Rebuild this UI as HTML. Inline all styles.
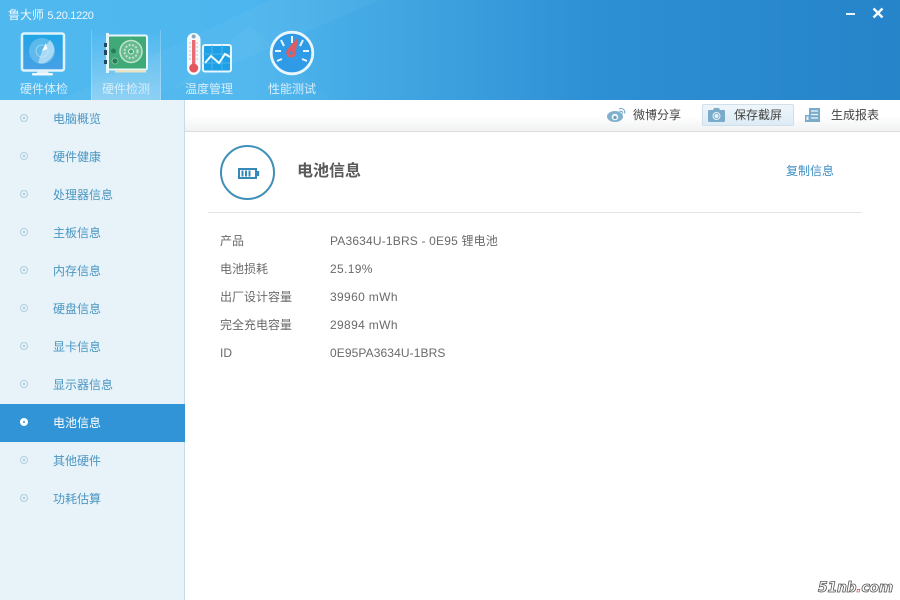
<!DOCTYPE html>
<html lang="zh-CN"><head><meta charset="utf-8"><title>鲁大师</title>
<style>
*{margin:0;padding:0;box-sizing:border-box}
html,body{width:900px;height:600px;overflow:hidden;background:#fff}
body{position:relative;font-family:"Liberation Sans","Noto Sans CJK SC",sans-serif;font-size:12px}
.a{position:absolute;white-space:nowrap}
#hd{left:0;top:0;width:900px;height:100px;background:linear-gradient(90deg,#4fb9ef 0,#4db6ee 250px,#3fa3e0 420px,#2d8fd4 600px,#2684c9 900px);overflow:hidden}
.nav{color:#d6eefb;font-size:12px;top:81px;width:72px;text-align:center;line-height:16px}
#side{left:0;top:100px;width:185px;height:500px;background:#e7f3f9;border-right:1px solid #c5dbe8}
.it{position:absolute;left:53px;color:#4b96c2;font-size:12px;line-height:16px;white-space:nowrap}
.dot{position:absolute;left:20px;width:8px;height:8px;border:1px solid #b0cfde;border-radius:50%}
.dot:after{content:"";position:absolute;left:2px;top:2px;width:2px;height:2px;background:#96bdd1;border-radius:50%}
#tb{left:185px;top:100px;width:715px;height:32px;background:linear-gradient(#fff 0,#fff 50%,#f1f2f3 100%);border-bottom:1px solid #dcdcdc}
.tt{color:#444;font-size:12px;top:107px;line-height:16px}
.l{left:220px;color:#6a6a6a;line-height:16px}
.v{left:330px;color:#6a6a6a;line-height:16px;letter-spacing:.35px}
</style></head><body>
<div class="a" id="hd">
<svg width="900" height="100" style="position:absolute;left:0;top:0"><path d="M60 100L270 0H380L150 100Z" fill="#fff" opacity=".04"/><path d="M160 100L250 25L330 100Z" fill="#fff" opacity=".03"/></svg>
<div class="a" style="left:91px;top:30px;width:70px;height:70px;background:linear-gradient(rgba(255,255,255,0),rgba(255,255,255,.34));border-left:1px solid rgba(255,255,255,.22);border-right:1px solid rgba(255,255,255,.22)"></div>
<div class="a" style="left:8px;top:7px;color:#eef8fe;font-size:12px;line-height:16px">鲁大师 <span style="font-size:11px;letter-spacing:-.3px">5.20.1220</span></div>
<svg class="a" style="left:0;top:25px;filter:blur(.35px)" width="340" height="60" viewBox="0 25 340 60">
<!-- monitor -->
<defs><linearGradient id="m" x1="0" y1="0" x2="0" y2="1"><stop offset="0" stop-color="#1fa6e6"/><stop offset="1" stop-color="#4a9fe6"/></linearGradient></defs>
<rect x="22" y="33.5" width="42" height="37" rx="2" fill="url(#m)" stroke="#dff3fc" stroke-width="2.5"/>
<circle cx="42" cy="51" r="13" fill="#7cc8f0" opacity=".6"/><circle cx="42" cy="51" r="6" fill="none" stroke="#b6e1f7" opacity=".7"/>
<path d="M42 51L50 40C56 46 56 55 48 61C46 63 42 64 38 63Z" fill="#cfeafa" opacity=".65"/><path d="M42 51L46 43L47 49Z" fill="#fff"/>
<path d="M37 71H48L49 74H37Z" fill="#dfeff8"/><rect x="32" y="73" width="21" height="2.5" rx="1" fill="#eef8fd"/>
<!-- card -->
<rect x="106" y="33" width="3" height="40" fill="#e3f3fb"/><rect x="104" y="43" width="3" height="4" fill="#23475f"/><rect x="104" y="50" width="3" height="5" fill="#23475f"/><rect x="104" y="60" width="3" height="4" fill="#23475f"/>
<rect x="108" y="35.5" width="39" height="34" rx="1.5" fill="#3faa78" stroke="#e8f6f9" stroke-width="2"/>
<path d="M115 70H146V72.500H115Z" fill="#e8e3c2"/>
<circle cx="131" cy="51.5" r="11" fill="#67b98f" stroke="#bfe5cd" stroke-width="1.5"/><circle cx="131" cy="51.5" r="6.5" fill="none" stroke="#bfe5cd" stroke-width="2" stroke-dasharray="2 1.5"/><circle cx="131" cy="51.5" r="2.5" fill="#3faa78" stroke="#d4efdd"/>
<circle cx="113.5" cy="51" r="2.5" fill="#2a7d5a"/><circle cx="115" cy="61" r="3" fill="#2a7d5a" stroke="#8fcfae" stroke-width=".7"/>
<!-- thermometer -->
<rect x="187" y="33" width="13.500" height="42" rx="6.700" fill="#f3f9fc"/><rect x="192" y="40" width="3.400" height="26" fill="#e76b72"/><circle cx="193.700" cy="68" r="4.500" fill="#e4555f"/><circle cx="193.700" cy="36.500" r="2" fill="#8aa8ba"/>
<path d="M196 43h2M196 47h2M196 51h2M196 55h2M196 59h2M189 43h2M189 47h2M189 51h2M189 55h2M189 59h2" stroke="#d6a2a8" stroke-width=".8"/>
<!-- chart -->
<rect x="203" y="45" width="28" height="26.500" rx="2" fill="#1ea0e6" stroke="#e6f6fd" stroke-width="2"/>
<path d="M212 45V71M222 45V71M203 54H230M203 63H230" stroke="#5cbcee" stroke-width=".7"/>
<path d="M205 63L211 56L219 63L225 54L230 57" fill="none" stroke="#f4fbff" stroke-width="2"/>
<!-- gauge -->
<circle cx="292" cy="53" r="20.800" fill="#2f9ae6" stroke="#e9f7fd" stroke-width="2.800"/>
<path d="M292 36V43M281 40L284 46M303 40L300 46M275 51H281M309 51H303M277 61L282 59M307 61L302 59" stroke="#e6f6fc" stroke-width="2"/>
<path d="M298 37L296 51A5 5 0 1 1 287 50Z" fill="#de5d63"/><circle cx="291" cy="53" r="1.600" fill="#2f95e3"/>
</svg>
<div class="a nav" style="left:8px">硬件体检</div>
<div class="a nav" style="left:90px">硬件检测</div>
<div class="a nav" style="left:173px">温度管理</div>
<div class="a nav" style="left:256px">性能测试</div>
<svg class="a" style="left:840px;top:5px" width="50" height="16"><rect x="6" y="8" width="9" height="2" fill="#e8f5fc"/><path d="M33.500 3.500L42.500 12.500M42.500 3.500L33.500 12.500" stroke="#f4fbff" stroke-width="2.400"/></svg>
</div>
<div class="a" id="side">
<div class="a" style="left:0;top:304px;width:185px;height:38px;background:#3094d7"></div>
<i class="dot" style="top:14px"></i><div class="it" style="top:11px">电脑概览</div>
<i class="dot" style="top:52px"></i><div class="it" style="top:49px">硬件健康</div>
<i class="dot" style="top:90px"></i><div class="it" style="top:87px">处理器信息</div>
<i class="dot" style="top:128px"></i><div class="it" style="top:125px">主板信息</div>
<i class="dot" style="top:166px"></i><div class="it" style="top:163px">内存信息</div>
<i class="dot" style="top:204px"></i><div class="it" style="top:201px">硬盘信息</div>
<i class="dot" style="top:242px"></i><div class="it" style="top:239px">显卡信息</div>
<i class="dot" style="top:280px"></i><div class="it" style="top:277px">显示器信息</div>
<svg class="a" style="left:20px;top:318px" width="9" height="9"><circle cx="4" cy="4" r="4" fill="#fff"/><circle cx="4" cy="4" r="1" fill="#3094d7"/></svg><div class="it" style="top:315px;color:#fff">电池信息</div>
<i class="dot" style="top:356px"></i><div class="it" style="top:353px">其他硬件</div>
<i class="dot" style="top:394px"></i><div class="it" style="top:391px">功耗估算</div>
</div>
<div class="a" id="tb"></div>
<div class="a" style="left:702px;top:104px;width:92px;height:22px;background:linear-gradient(#eff6fb,#dcebf5);border:1px solid #cfe0ec;border-radius:2px"></div>
<svg class="a" style="left:600px;top:104px" width="290" height="24">
<ellipse cx="15" cy="12.500" rx="8" ry="5.500" fill="#7fb0cc"/><circle cx="15" cy="13" r="3.300" fill="#eef5f9"/><circle cx="15" cy="13.500" r="1.600" fill="#6f9cb8"/><path d="M19 5C22 3.500 25.500 5.500 24.500 9.500M19.500 7.500C21.500 6.800 23 8 22.500 9.500" fill="none" stroke="#7fb0cc" stroke-width="1.200"/>
<path d="M109 6H113L114 4H119L120 6H124A1 1 0 0 1 125 7V17A1 1 0 0 1 124 18H109A1 1 0 0 1 108 17V7A1 1 0 0 1 109 6Z" fill="#7aabc9"/><circle cx="116.500" cy="12" r="4" fill="#e7f1f8"/><circle cx="116.500" cy="12" r="2.500" fill="none" stroke="#7aabc9"/>
<path d="M209 4H220V18H205V11H209Z" fill="#7aabc9"/><path d="M211 7H218M211 10.500H218M211 14H218" stroke="#eef5f9" stroke-width="1.200"/><rect x="206.500" y="12.500" width="2" height="3.500" fill="#eef5f9"/>
</svg>
<div class="a tt" style="left:633px">微博分享</div>
<div class="a tt" style="left:734px">保存截屏</div>
<div class="a tt" style="left:831px">生成报表</div>
<svg class="a" style="left:219px;top:144px" width="58" height="58"><circle cx="28.500" cy="28.500" r="26.500" fill="#fff" stroke="#3f8fb8" stroke-width="2"/><rect x="20" y="25" width="17" height="9" fill="#fff" stroke="#358ab8" stroke-width="2"/><rect x="38" y="27" width="2.200" height="5" fill="#358ab8"/><path d="M23.500 26.500V32.500M27 26.500V32.500M30.500 26.500V32.500" stroke="#358ab8" stroke-width="2"/></svg>
<div class="a" style="left:297px;top:161px;color:#5a5a5a;font-size:16px;font-weight:700;line-height:22px">电池信息</div>
<div class="a" style="left:786px;top:163px;color:#3f8fc4;line-height:16px">复制信息</div>
<div class="a" style="left:208px;top:212px;width:654px;height:1px;background:#e4e4e4"></div>
<div class="a l" style="top:233px">产品</div><div class="a v" style="top:233px;letter-spacing:.18px">PA3634U-1BRS - 0E95 锂电池</div>
<div class="a l" style="top:261px">电池损耗</div><div class="a v" style="top:261px">25.19%</div>
<div class="a l" style="top:289px">出厂设计容量</div><div class="a v" style="top:289px">39960 mWh</div>
<div class="a l" style="top:317px">完全充电容量</div><div class="a v" style="top:317px">29894 mWh</div>
<div class="a l" style="top:345px">ID</div><div class="a v" style="top:345px;letter-spacing:.1px">0E95PA3634U-1BRS</div>
<div class="a" style="left:818px;top:580px;font:italic 700 14px/16px 'DejaVu Sans',sans-serif;color:#fff;-webkit-text-stroke:.8px #555;letter-spacing:-.3px">51nb<span style="-webkit-text-stroke:.6px #c33">.</span>com</div>
</body></html>
